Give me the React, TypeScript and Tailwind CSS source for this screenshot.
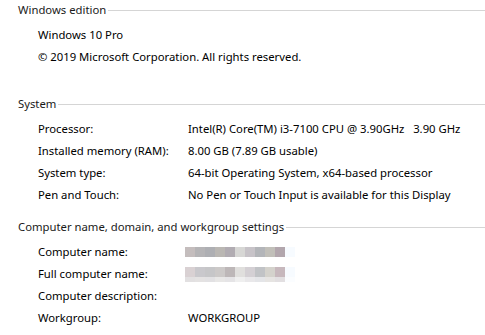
import React from "react";

function Header({ title, className = "" }: { title: string; className?: string }) {
  return (
    <div className={`flex items-center h-[20px] pl-[18px] ${className}`}>
      <span className="text-[#1a1a1a] whitespace-nowrap">{title}</span>
      <div className="flex-1 h-px bg-[#d5d5d5] ml-[2px] mt-[1px]" />
    </div>
  );
}

function Row({ label, children }: { label?: string; children?: React.ReactNode }) {
  return (
    <div className="flex items-center h-[22px] pl-[38px] whitespace-nowrap">
      {label !== undefined && <span className="w-[150px] shrink-0">{label}</span>}
      {children}
    </div>
  );
}

const row1 = ["#c4bdbd", "#b5b4b6", "#aeafb3", "#bab7b3", "#b1acb2", "#d7d7d5", "#c7c3c8", "#b3b5b9", "#c1bfb9", "#b2a6ad", "#f7fbff"];
const row2a = ["#d9d1d3", "#c9c8cc", "#c6c6c8", "#ccc9c8", "#bdb7b8", "#e0dfdd", "#d4d0d4", "#c1c3c6", "#d4d2cc", "#c7b8bd", "#f7fbff"];
const row2b = ["#e2e0e1", "#e4e2e2", "#e2e1e3", "#e8e7e6", "#e5e4e6", "#efefef", "#e9e8ea", "#e4e5e8", "#e6e4e2", "#e2dfe1", "#fbfdff"];

function Blur({ rows }: { rows: { colors: string[]; h: number }[] }) {
  return (
    <div className="flex flex-col -ml-[3px]">
      {rows.map((r, i) => (
        <div key={i} className="flex">
          {r.colors.map((c, j) => (
            <div key={j} className="w-[10px]" style={{ backgroundColor: c, height: r.h }} />
          ))}
        </div>
      ))}
    </div>
  );
}

export default function App() {
  return (
    <div
      className="w-[485px] h-[335px] bg-white text-black text-[11.3px] overflow-hidden"
      style={{ fontFamily: '"Noto Sans", "Open Sans", sans-serif' }}
    >
      <Header title="Windows edition" />
      <div className="mt-[4px]">
        <Row>Windows 10 Pro</Row>
        <Row>© 2019 Microsoft Corporation. All rights reserved.</Row>
      </div>
      <Header title="System" className="mt-[26px]" />
      <div className="mt-[4px]">
        <Row label="Processor:">Intel(R) Core(TM) i3-7100 CPU @ 3.90GHz&nbsp;&nbsp;&nbsp;3.90 GHz</Row>
        <Row label="Installed memory (RAM):">8.00 GB (7.89 GB usable)</Row>
        <Row label="System type:">64-bit Operating System, x64-based processor</Row>
        <Row label="Pen and Touch:">No Pen or Touch Input is available for this Display</Row>
      </div>
      <Header title="Computer name, domain, and workgroup settings" className="mt-[11px]" />
      <div className="mt-[4px]">
        <Row label="Computer name:">
          <Blur rows={[{ colors: row1, h: 10 }]} />
        </Row>
        <Row label="Full computer name:">
          <Blur rows={[{ colors: row2a, h: 10 }, { colors: row2b, h: 5 }]} />
        </Row>
        <Row label="Computer description:" />
        <Row label="Workgroup:">WORKGROUP</Row>
      </div>
    </div>
  );
}
